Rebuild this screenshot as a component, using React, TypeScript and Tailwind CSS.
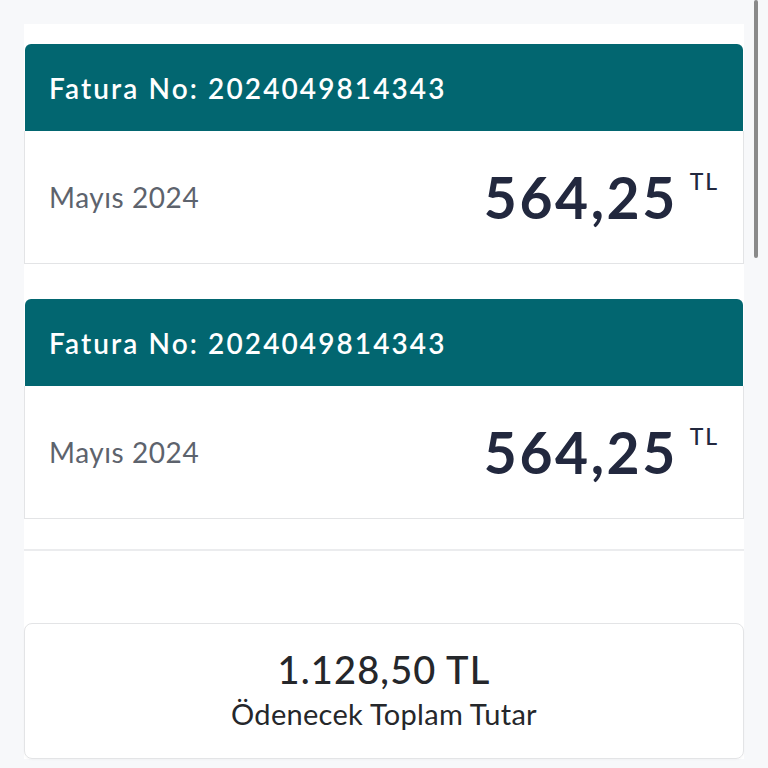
import React from 'react';

const invoices = [
    { no: '2024049814343', period: 'Mayıs 2024', amount: '564,25' },
    { no: '2024049814343', period: 'Mayıs 2024', amount: '564,25' },
];

function InvoiceCard({ no, period, amount }: { no: string, period: string, amount: string }) {
    return (
        <div className="flex flex-col">
            <div className="h-[87px] bg-[#026670] rounded-t-[6px] mx-px flex items-center px-6">
                <span className="text-white text-[28px] font-semibold tracking-[0.075em]">Fatura No: {no}</span>
            </div>
            <div className="h-[133px] bg-white border border-[#e3e4e6] border-t-0 flex items-center justify-between pl-6 pr-6">
                <span className="text-[28px] text-[#5d636d] tracking-[0.02em]">{period}</span>
                <div className="flex items-start">
                    <span className="text-[57px] leading-none font-bold text-[#22283e] tracking-[0.045em]">{amount}</span>
                    <span className="text-[23px] leading-none font-medium text-[#22283e] ml-[12px] mt-[1px] tracking-[0.08em]">TL</span>
                </div>
            </div>
        </div>
    );
}

export default function App() {
    return (
        <div className="relative min-h-[768px] bg-[#f7f8fa] pt-6 px-6 pb-2" style={{ fontFamily: 'Lato, "Noto Sans", sans-serif' }}>
            <div className="bg-white pt-5 flex flex-col">
                <div className="flex flex-col gap-[35px]">
                    {invoices.map((inv, i) => (
                        <InvoiceCard key={i} {...inv} />
                    ))}
                </div>
                <div className="h-[32px] border-b-2 border-[#ebecee]"></div>
                <div className="h-[72px]"></div>
                <div className="h-[136px] border border-[#e3e4e6] rounded-lg flex flex-col items-center justify-center gap-[8px] shadow-[0_1px_2px_rgba(0,0,0,0.03)]">
                    <span className="text-[38px] leading-none text-[#25272b] font-medium tracking-[0.03em]">1.128,50 TL</span>
                    <span className="text-[29px] leading-tight text-[#25272b] tracking-[0.01em]">Ödenecek Toplam Tutar</span>
                </div>
            </div>
            <div className="absolute top-0 right-[10px] w-[4px] h-[258px] bg-[#8a8a8a] rounded-full"></div>
        </div>
    );
}
